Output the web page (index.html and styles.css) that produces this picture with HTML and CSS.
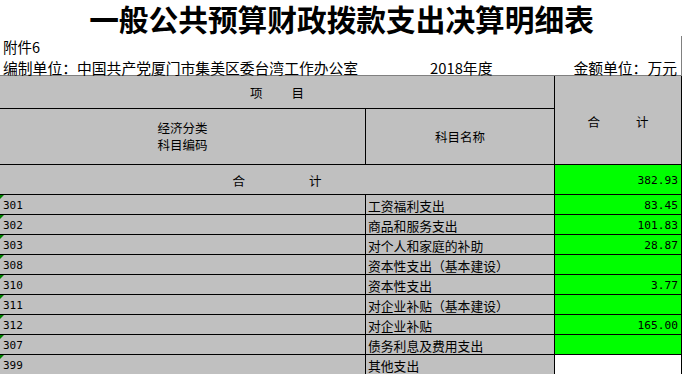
FILE: index.html
```html
<!DOCTYPE html>
<html lang="zh-CN">
<head>
<meta charset="utf-8">
<title>一般公共预算财政拨款支出决算明细表</title>
<link rel="stylesheet" href="styles.css">
</head>
<body>
<div class="page">
  <h1 class="title">一般公共预算财政拨款支出决算明细表</h1>
  <div class="info">
    <div class="doc-no">附件6</div>
    <div class="meta">
      <span class="unit">编制单位：中国共产党厦门市集美区委台湾工作办公室</span>
      <span class="year">2018年度</span>
      <span class="money">金额单位：万元</span>
    </div>
  </div>
  <div class="sheet">
    <div class="cell head span-ab"><span>项</span><span class="gap-xm"></span><span>目</span></div>
    <div class="cell head col-c span-rows"><span>合</span><span class="gap-hj"></span><span>计</span></div>
    <div class="cell head two-line"><div>经济分类</div><div>科目编码</div></div>
    <div class="cell head">科目名称</div>

    <div class="cell total span-ab"><span>合</span><span class="gap-total"></span><span>计</span></div>
    <div class="cell val green">382.93</div>

    <div class="cell code">301</div><div class="cell name">工资福利支出</div><div class="cell val green">83.45</div>
    <div class="cell code">302</div><div class="cell name">商品和服务支出</div><div class="cell val green">101.83</div>
    <div class="cell code">303</div><div class="cell name">对个人和家庭的补助</div><div class="cell val green">28.87</div>
    <div class="cell code">308</div><div class="cell name">资本性支出（基本建设）</div><div class="cell val green"></div>
    <div class="cell code">310</div><div class="cell name">资本性支出</div><div class="cell val green">3.77</div>
    <div class="cell code">311</div><div class="cell name">对企业补贴（基本建设）</div><div class="cell val green"></div>
    <div class="cell code">312</div><div class="cell name">对企业补贴</div><div class="cell val green">165.00</div>
    <div class="cell code">307</div><div class="cell name">债务利息及费用支出</div><div class="cell val green"></div>
    <div class="cell code">399</div><div class="cell name">其他支出</div><div class="cell val white"></div>
  </div>
</div>
</body>
</html>
```

FILE: styles.css
```css
* { box-sizing: border-box; }
html, body { margin: 0; padding: 0; background: #ffffff; }
body {
  font-family: "Noto Sans CJK SC", "Noto Sans", sans-serif;
  color: #000;
}
.page { width: 683px; height: 374px; overflow: hidden; }

.title {
  margin: 0;
  height: 36px;
  line-height: 37px;
  font-size: 29.7px;
  font-weight: 700;
  text-align: center;
  white-space: nowrap;
}

.info {
  width: 682px;
  border-right: 1px solid #808080;
}
.doc-no {
  height: 20px;
  display: flex;
  align-items: flex-end;
  padding-left: 3px;
  font-size: 14.5px;
  line-height: 18px;
}
.meta {
  height: 19px;
  display: flex;
  align-items: flex-end;
  padding: 0 4px 0 3px;
  font-size: 14.8px;
  line-height: 15px;
  white-space: nowrap;
}
.unit { width: 427px; }
.year { flex: 1; }

.sheet {
  width: 682px;
  display: grid;
  grid-template-columns: 366px 189px 127px;
  grid-template-rows: 33px 56px 30px repeat(9, 20px);
  border-top: 1px solid #808080;
}
.cell {
  background: #c0c0c0;
  border-right: 1px solid #000;
  border-bottom: 1px solid #000;
  display: flex;
  align-items: center;
  white-space: nowrap;
  overflow: hidden;
  position: relative;
}
.head {
  justify-content: center;
  font-size: 12.5px;
  line-height: 16px;
}
.span-ab { grid-column: 1 / 3; justify-content: center; }
.span-rows { grid-row: 1 / 3; grid-column: 3; padding-top: 3px; }
.sheet > .head.span-ab { padding-top: 2px; }
.two-line {
  flex-direction: column;
  justify-content: center;
  text-align: center;
  line-height: 16.5px;
}
.gap-xm { display: inline-block; width: 29px; }
.gap-hj { display: inline-block; width: 36px; }
.gap-total { display: inline-block; width: 64px; }
.total { font-size: 12.5px; padding-top: 1px; }

.code {
  font-family: "DejaVu Sans Mono", "Liberation Mono", monospace;
  font-size: 11px;
  padding-left: 3px;
  padding-top: 1px;
}
.code::before {
  content: "";
  position: absolute;
  left: 0;
  top: 0;
  width: 0;
  height: 0;
  border-top: 4px solid #008000;
  border-right: 4px solid transparent;
}
.name {
  font-size: 12.8px;
  padding-left: 2px;
  padding-top: 1px;
}
.val {
  justify-content: flex-end;
  font-family: "DejaVu Sans Mono", "Liberation Mono", monospace;
  font-size: 11.2px;
  padding-right: 3px;
  padding-top: 2px;
}
.green { background: #00ff00; }
.white { background: #ffffff; }
```
